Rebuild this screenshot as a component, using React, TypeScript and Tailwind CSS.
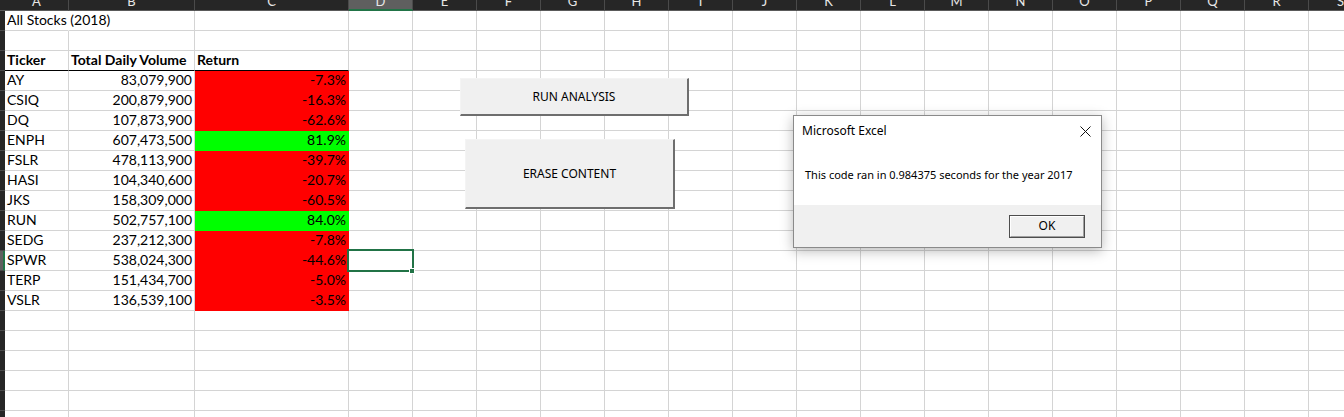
import React from "react";

type Col = { letter: string; w: string };

const COLS: Col[] = [
  { letter: "A", w: "w-[64px]" },
  { letter: "B", w: "w-[126px]" },
  { letter: "C", w: "w-[154px]" },
  ...["D", "E", "F", "G", "H", "I", "J", "K", "L", "M", "N", "O", "P", "Q", "R", "S"].map(
    (letter) => ({ letter, w: "w-[64px]" }),
  ),
];

const STOCKS: Array<[string, string, string, boolean]> = [
  ["AY", "83,079,900", "-7.3%", false],
  ["CSIQ", "200,879,900", "-16.3%", false],
  ["DQ", "107,873,900", "-62.6%", false],
  ["ENPH", "607,473,500", "81.9%", true],
  ["FSLR", "478,113,900", "-39.7%", false],
  ["HASI", "104,340,600", "-20.7%", false],
  ["JKS", "158,309,000", "-60.5%", false],
  ["RUN", "502,757,100", "84.0%", true],
  ["SEDG", "237,212,300", "-7.8%", false],
  ["SPWR", "538,024,300", "-44.6%", false],
  ["TERP", "151,434,700", "-5.0%", false],
  ["VSLR", "136,539,100", "-3.5%", false],
];

const ROW_COUNT = 21;
const SELECTED_ROW = 13;

type CellSpec = {
  text?: string;
  bold?: boolean;
  right?: boolean;
  fill?: "red" | "green";
  noRight?: boolean;
  blackBottom?: boolean;
};

function cellFor(row: number, col: number): CellSpec {
  if (row === 1 && col === 0) return { text: "All Stocks (2018)", noRight: true };
  if (row === 3 && col < 3)
    return { text: ["Ticker", "Total Daily Volume", "Return"][col], bold: true, blackBottom: true };
  const s = STOCKS[row - 4];
  if (s && col < 3) {
    if (col === 0) return { text: s[0] };
    if (col === 1) return { text: s[1], right: true };
    return { text: s[2], right: true, fill: s[3] ? "green" : "red" };
  }
  return {};
}

function Cell({ spec, w }: { spec: CellSpec; w: string }) {
  const fillCls =
    spec.fill === "red"
      ? "bg-[#ff0000] border-[#ff0000]"
      : spec.fill === "green"
        ? "bg-[#00ff00] border-[#00ff00]"
        : "border-[#d4d4d4]";
  return (
    <div
      className={`${w} shrink-0 h-full border-r border-b flex items-end pb-[2px] ${fillCls} ${
        spec.noRight ? "border-r-transparent" : ""
      } ${spec.blackBottom ? "border-b-black" : ""} ${spec.right ? "justify-end pr-[2px]" : "pl-[2px]"}`}
    >
      {spec.text && (
        <span
          className={`whitespace-nowrap text-[14px] leading-[16px] text-black ${spec.bold ? "font-bold" : ""}`}
        >
          {spec.text}
        </span>
      )}
    </div>
  );
}

function ColumnHeader() {
  return (
    <div className="flex h-[11px] bg-[#262626]">
      <div className="w-[5px] shrink-0 border-b border-[#5a5a5a]" />
      {COLS.map((c) => {
        const selected = c.letter === "D";
        return (
          <div
            key={c.letter}
            className={`${c.w} shrink-0 overflow-hidden flex justify-center border-r border-[#4a4a4a] ${
              selected ? "bg-[#5f5f5f] border-b-2 border-b-[#217346]" : "border-b border-b-[#5a5a5a]"
            }`}
          >
            <span className="-mt-[6px] text-[13px] leading-[14px] text-[#e6e6e6]">{c.letter}</span>
          </div>
        );
      })}
    </div>
  );
}

function SheetRow({ row }: { row: number }) {
  const selected = row === SELECTED_ROW;
  return (
    <div className="flex h-[20px]">
      <div
        className={`w-[5px] shrink-0 border-b border-[#4a4a4a] ${
          selected ? "bg-[#5f5f5f] border-r-2 border-r-[#217346]" : "bg-[#262626]"
        }`}
      />
      {COLS.map((c, i) => (
        <Cell key={c.letter} spec={cellFor(row, i)} w={c.w} />
      ))}
    </div>
  );
}

function MacroButton({ label, className }: { label: string; className: string }) {
  return (
    <div
      className={`absolute ${className} bg-[#f0f0f0] border-t border-l border-[#f4f4f4] border-r-2 border-b-2 border-r-[#6e6e6e] border-b-[#6e6e6e] flex items-center justify-center font-['Noto_Sans',sans-serif] text-[12px] text-black`}
    >
      {label}
    </div>
  );
}

function MessageBox() {
  return (
    <div className="absolute left-[793px] top-[115px] w-[309px] h-[133px] bg-white border border-[#8a8a8a] shadow-[0_3px_12px_rgba(0,0,0,0.28)] flex flex-col font-['Noto_Sans',sans-serif] text-black">
      <div className="h-[30px] flex items-center justify-between pl-[8px] pr-[10px] text-[12px]">
        <span>Microsoft Excel</span>
        <svg width="11" height="11" viewBox="0 0 11 11" className="text-[#111]">
          <path d="M0.5 0.5 L10.5 10.5 M10.5 0.5 L0.5 10.5" stroke="currentColor" strokeWidth="1" />
        </svg>
      </div>
      <div className="h-[59px] flex items-center pl-[11px] text-[11px]">
        This code ran in 0.984375 seconds for the year 2017
      </div>
      <div className="flex-1 bg-[#f0f0f0] flex items-center justify-end pr-[16px]">
        <div className="w-[76px] h-[23px] border border-[#4d4d4d] flex">
          <div className="flex-1 border-t border-l border-white border-r border-b border-r-[#a0a0a0] border-b-[#a0a0a0] bg-[#f0f0f0] flex items-center justify-center text-[12px]">
            OK
          </div>
        </div>
      </div>
    </div>
  );
}

export default function App() {
  return (
    <div className="relative w-[1344px] h-[417px] overflow-hidden bg-white font-[Lato,sans-serif]">
      <ColumnHeader />
      {Array.from({ length: ROW_COUNT }, (_, i) => (
        <SheetRow key={i} row={i + 1} />
      ))}

      {/* active cell D13 */}
      <div className="absolute left-[347px] top-[249px] w-[67px] h-[23px] border-2 border-[#217346]" />
      <div className="absolute left-[409px] top-[268px] w-[6px] h-[6px] bg-[#217346] border border-white" />

      <MacroButton label="RUN ANALYSIS" className="left-[460px] top-[78px] w-[229px] h-[38px]" />
      <MacroButton label="ERASE CONTENT" className="left-[465px] top-[139px] w-[210px] h-[70px]" />

      <MessageBox />
    </div>
  );
}
